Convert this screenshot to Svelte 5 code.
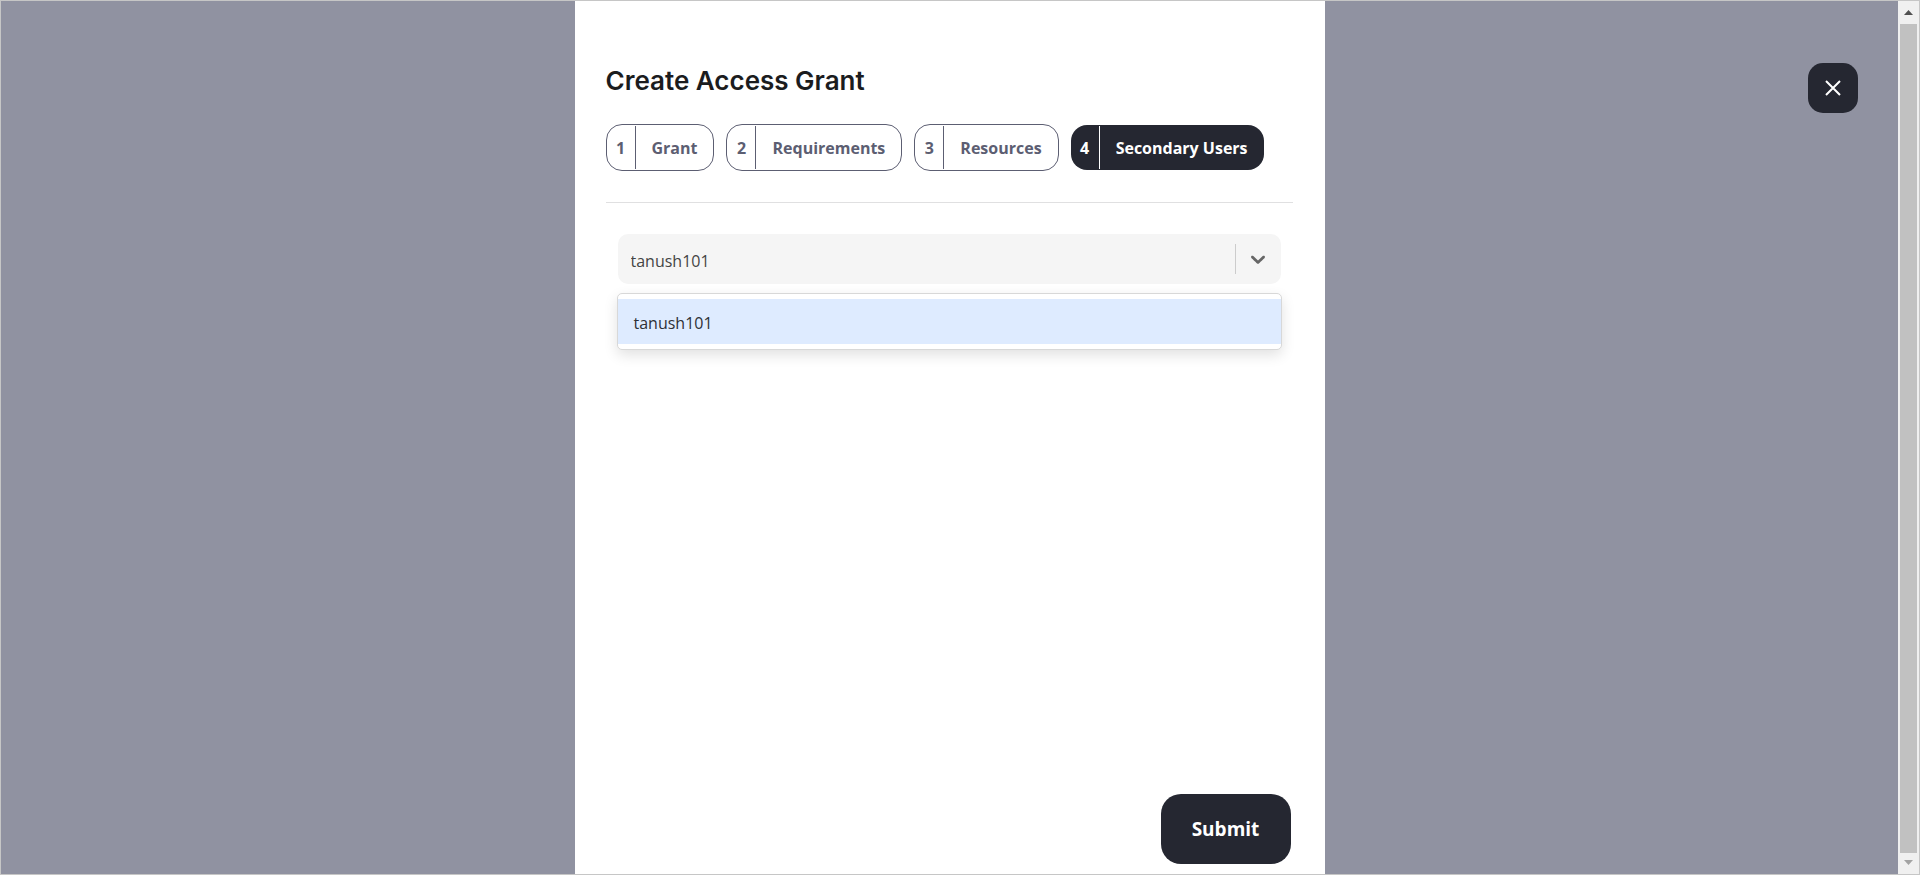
<script>
  const steps = ['Grant', 'Requirements', 'Resources', 'Secondary Users'];
  let active = $state(3);
  let user = $state('tanush101');
  const users = ['tanush101'];
</script>

<div class="screen">
  <div class="overlay">
    <main class="panel">
      <h1>Create Access Grant</h1>
      <nav class="steps" aria-label="Steps">
        {#each steps as step, i}
          <button type="button" class="step" class:active={i === active} onclick={() => (active = i)}>
            <span class="number">{i + 1}</span>
            <span class="label">{step}</span>
          </button>
        {/each}
      </nav>
      <hr />
      <div class="field">
        <div class="control">
          <input type="text" role="combobox" aria-label="Secondary user" aria-expanded="true" aria-controls="users" bind:value={user} />
          <span class="separator"></span>
          <button type="button" class="toggle" aria-label="Toggle options">
            <svg width="24" height="24" viewBox="0 0 20 20" aria-hidden="true">
              <path fill="currentColor" d="M4.516 7.548c0.436-0.446 1.043-0.481 1.576 0l3.908 3.747 3.908-3.747c0.533-0.481 1.141-0.446 1.574 0 0.436 0.445 0.408 1.197 0 1.615-0.406 0.418-4.695 4.502-4.695 4.502-0.217 0.223-0.502 0.335-0.787 0.335s-0.57-0.112-0.789-0.335c0 0-4.287-4.084-4.695-4.502s-0.436-1.17 0-1.615z" />
            </svg>
          </button>
        </div>
        <div class="menu" id="users" role="listbox" aria-label="Users">
          {#each users as name}
            <button type="button" class="option" role="option" aria-selected="true" onclick={() => (user = name)}>{name}</button>
          {/each}
        </div>
      </div>
      <button type="button" class="submit">Submit</button>
    </main>
    <button type="button" class="close" aria-label="Close">
      <svg width="16" height="16" viewBox="0 0 16 16" aria-hidden="true">
        <path d="M1 1L15 15M15 1L1 15" fill="none" stroke="currentColor" stroke-width="2" />
      </svg>
    </button>
  </div>
  <div class="scrollbar" aria-hidden="true">
    <svg class="arrow" width="9" height="5" viewBox="0 0 9 5"><path d="M0 5L4.500 0L9 5z" fill="#505050" /></svg>
    <div class="thumb"></div>
    <svg class="arrow" width="9" height="5" viewBox="0 0 9 5"><path d="M0 0L4.500 5L9 0z" fill="#a3a3a3" /></svg>
  </div>
</div>

<style>
  .screen,
  .screen * {
    box-sizing: border-box;
  }
  .screen {
    display: flex;
    min-height: 100vh;
    border: 1px solid #c6c6c6;
    background: #9092a1;
    font-family: 'Open Sans', 'Noto Sans', sans-serif;
  }
  button {
    margin: 0;
    padding: 0;
    border: 0;
    font: inherit;
    cursor: pointer;
  }
  .overlay {
    position: relative;
    flex: 1;
    display: flex;
    justify-content: center;
  }
  .panel {
    display: flex;
    flex-direction: column;
    width: 100%;
    max-width: 750px;
    padding: 62px 32px 10px 31px;
    background: #fff;
  }
  h1 {
    margin: 0;
    font: 600 26px/36px Inter, sans-serif;
    color: #1b1c1e;
  }
  .steps {
    display: flex;
    align-items: center;
    gap: 12px;
    margin-top: 25px;
  }
  .step {
    display: flex;
    padding: 1px 0;
    border: 1px solid #5c5e72;
    border-radius: 16px;
    background: #fff;
    color: #5c5e72;
    font-size: 16px;
    font-weight: 700;
    white-space: nowrap;
  }
  .number,
  .label {
    padding-top: 2px;
    line-height: 41px;
  }
  .number {
    width: 29px;
    border-right: 1px solid currentColor;
    text-align: center;
  }
  .label {
    padding-left: 16px;
    padding-right: 16px;
  }
  .step.active {
    border-width: 0;
    background: #252731;
    color: #fff;
  }
  hr {
    width: 100%;
    height: 1px;
    margin: 31px 0;
    border: 0;
    background: #e0e0e1;
  }
  .field {
    position: relative;
    margin: 0 12px;
  }
  .control {
    display: flex;
    align-items: center;
    height: 50px;
    border-radius: 10px;
    background: #f5f5f5;
  }
  input {
    flex: 1;
    min-width: 0;
    height: 100%;
    padding: 4px 12px 0 13px;
    border: 0;
    outline: 0;
    background: transparent;
    color: #444;
    font: 400 16px 'Open Sans', 'Noto Sans', sans-serif;
  }
  .separator {
    width: 1px;
    height: 30px;
    background: #ccc;
  }
  .toggle {
    display: flex;
    justify-content: center;
    width: 45px;
    background: transparent;
    color: #666;
  }
  .menu {
    position: absolute;
    top: 59px;
    left: -1px;
    right: -1px;
    padding: 5px 0;
    border: 1px solid #d8d8d8;
    border-radius: 5px;
    background: #fff;
    box-shadow: 0 5px 14px rgba(0, 0, 0, 0.12);
  }
  .option {
    display: block;
    width: 100%;
    padding: 4px 16px 0;
    background: #deebff;
    color: #2e3036;
    font-size: 16px;
    line-height: 41px;
    text-align: left;
  }
  .submit {
    align-self: flex-end;
    width: 130px;
    height: 70px;
    margin-top: auto;
    margin-right: 2px;
    border-radius: 20px;
    background: #252731;
    color: #fff;
    font-size: 19px;
    font-weight: 700;
  }
  .close {
    position: absolute;
    top: 62px;
    right: 40px;
    display: flex;
    align-items: center;
    justify-content: center;
    width: 50px;
    height: 50px;
    border-radius: 15px;
    background: #252731;
    color: #fff;
  }
  .scrollbar {
    display: flex;
    flex-direction: column;
    align-items: center;
    gap: 7px;
    width: 21px;
    padding: 9px 2px;
    background: #f0f0f0;
  }
  .thumb {
    flex: 1;
    width: 17px;
    margin-top: 2px;
    background: #c1c1c1;
  }
</style>
